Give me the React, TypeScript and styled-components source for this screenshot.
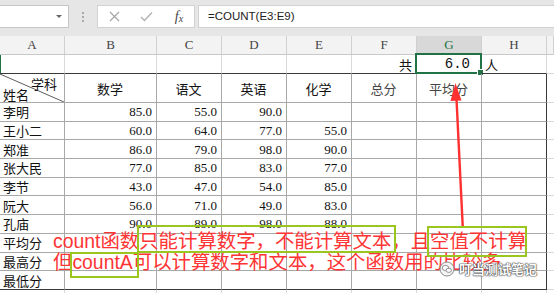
import React from "react";
import styled, { createGlobalStyle } from "styled-components";

const GlobalStyle = createGlobalStyle`
  html, body { margin: 0; padding: 0; background: #fff; }
  body { width: 554px; height: 293px; overflow: hidden; }
`;

const CJK = `"Noto Sans CJK SC", "Noto Sans", sans-serif`;
const SERIF = `"Liberation Serif", "Noto Sans CJK SC", serif`;
const COLS = "65px 92px 65px 65px 65px 65px 65px 65px 1fr";

const GRID = "#d9d9d9";
const TABLE = "#a8a8a8";
const OUTER = "#3a3a3a";
const GREEN = "#217346";

const Frame = styled.div`
  position: relative;
  width: 554px;
  height: 293px;
  overflow: hidden;
  background: #fff;
  display: flex;
  flex-direction: column;
`;

const FormulaBar = styled.div`
  height: 36px;
  flex: none;
  box-sizing: border-box;
  background: #e6e6e6;
  display: flex;
  align-items: flex-start;
  padding-top: 5px;
`;

const NameBox = styled.div`
  width: 69px;
  height: 23px;
  box-sizing: border-box;
  background: #fff;
  border: 1px solid #c6c6c6;
  border-left: none;
  display: flex;
  justify-content: flex-end;
  align-items: center;
  padding-right: 6px;
`;

const DropArrow = styled.span`
  width: 0;
  height: 0;
  border-left: 3px solid transparent;
  border-right: 3px solid transparent;
  border-top: 3px solid #666;
`;

const Grip = styled.div`
  width: 28px;
  height: 23px;
  display: flex;
  flex-direction: column;
  align-items: center;
  justify-content: center;
  gap: 2px;
`;

const GripDot = styled.span`
  width: 2px;
  height: 2px;
  background: #a9a9a9;
`;

const ButtonGroup = styled.div`
  width: 98px;
  height: 23px;
  box-sizing: border-box;
  background: #fff;
  border: 1px solid #d2d2d2;
  display: grid;
  grid-template-columns: 32px 32px 34px;
  align-items: center;
  justify-items: center;
`;

const Fx = styled.span`
  font-family: ${SERIF};
  font-style: italic;
  font-size: 14px;
  color: #444;
  line-height: 1;
  i { font-style: italic; }
  sub { font-size: 10px; vertical-align: -1px; }
`;

const FormulaInput = styled.div`
  flex: 1;
  margin-left: 3px;
  height: 23px;
  box-sizing: border-box;
  background: #fff;
  border: 1px solid #d2d2d2;
  border-right: none;
  padding-left: 9px;
  font-family: "Liberation Sans", Arial, sans-serif;
  font-size: 11.5px;
  line-height: 21px;
  color: #222;
`;

const HeadRow = styled.div`
  display: grid;
  grid-template-columns: ${COLS};
  height: 19px;
  flex: none;
  background: #f3f3f3;
`;

const ColHead = styled.div<{ $active?: boolean }>`
  box-sizing: border-box;
  border-right: 1px solid #d0d0d0;
  border-bottom: 1px solid ${(p) => (p.$active ? GREEN : "#c9c9c9")};
  box-shadow: ${(p) => (p.$active ? `inset 0 -1px 0 ${GREEN}` : "none")};
  background: ${(p) => (p.$active ? "#d8d8d8" : "transparent")};
  color: ${(p) => (p.$active ? GREEN : "#444")};
  font-family: ${SERIF};
  font-size: 13px;
  display: flex;
  align-items: center;
  justify-content: center;
`;

const Row = styled.div<{ $h: number }>`
  display: grid;
  grid-template-columns: ${COLS};
  height: ${(p) => p.$h}px;
  flex: none;
`;

const Cell = styled.div<{
  $align?: "left" | "right" | "center";
  $r: string;
  $b: string;
  $mark?: boolean;
}>`
  position: relative;
  box-sizing: border-box;
  border-right: 1px solid ${(p) => p.$r};
  border-bottom: 1px solid ${(p) => p.$b};
  box-shadow: ${(p) => (p.$mark ? `inset 1px 0 0 ${GREEN}` : "none")};
  display: flex;
  align-items: center;
  justify-content: ${(p) =>
    p.$align === "right" ? "flex-end" : p.$align === "center" ? "center" : "flex-start"};
  padding: 0 4px 0 3px;
  white-space: nowrap;
`;

const Label = styled.span<{ $tone?: string }>`
  font-family: ${CJK};
  font-size: 13px;
  color: ${(p) => p.$tone || "#111"};
  line-height: 1;
`;

const Num = styled.span`
  font-family: ${SERIF};
  font-size: 13px;
  color: #111;
  line-height: 1;
`;

const Count = styled.span`
  font-family: "Liberation Mono", monospace;
  font-size: 14px;
  color: #111;
  padding-right: 7px;
`;

const Selection = styled.div`
  position: absolute;
  left: -2px;
  top: -2px;
  right: -1px;
  bottom: -1px;
  border: 2px solid ${GREEN};
  pointer-events: none;
  &::after {
    content: "";
    position: absolute;
    right: -4px;
    bottom: -4px;
    width: 5px;
    height: 5px;
    background: ${GREEN};
    border: 1px solid #fff;
  }
`;

const DiagCell = styled(Cell)`
  display: block;
  padding: 0;
`;

const DiagLine = styled.svg`
  position: absolute;
  left: 0;
  top: 0;
  width: 100%;
  height: 100%;
`;

const DiagTop = styled(Label)`
  position: absolute;
  right: 7px;
  top: 3px;
`;

const DiagBottom = styled(Label)`
  position: absolute;
  left: 3px;
  bottom: 1px;
`;

const Annotation = styled.div`
  position: absolute;
  left: 53px;
  top: 231px;
  font-family: "Liberation Sans", ${CJK};
  font-size: 19.4px;
  line-height: 21px;
  color: #ff3434;
  white-space: nowrap;
`;

const GreenBox = styled.div<{ $x: number; $y: number; $w: number; $h: number }>`
  position: absolute;
  left: ${(p) => p.$x}px;
  top: ${(p) => p.$y}px;
  width: ${(p) => p.$w}px;
  height: ${(p) => p.$h}px;
  box-sizing: border-box;
  border: 2.5px solid #9bc61f;
`;

const ArrowLayer = styled.svg`
  position: absolute;
  left: 0;
  top: 0;
  pointer-events: none;
`;

const Watermark = styled.div`
  position: absolute;
  left: 439px;
  top: 259px;
  display: flex;
  align-items: center;
  gap: 4px;
`;

const WatermarkText = styled.span`
  font-family: ${CJK};
  font-size: 13px;
  font-weight: 700;
  color: #fff;
  text-shadow: 0 0 1px #333, 0 0 1px #333, 0 0 2px #555;
`;

type RowData = { name: string; vals: (string | null)[] };

const DATA: RowData[] = [
  { name: "李明", vals: ["85.0", "55.0", "90.0", null] },
  { name: "王小二", vals: ["60.0", "64.0", "77.0", "55.0"] },
  { name: "郑准", vals: ["86.0", "79.0", "98.0", "90.0"] },
  { name: "张大民", vals: ["77.0", "85.0", "83.0", "77.0"] },
  { name: "李节", vals: ["43.0", "47.0", "54.0", "85.0"] },
  { name: "阮大", vals: ["56.0", "71.0", "49.0", "83.0"] },
  { name: "孔庙", vals: ["90.0", "89.0", "98.0", "88.0"] },
  { name: "平均分", vals: [null, null, null, null] },
  { name: "最高分", vals: [null, null, null, null] },
  { name: "最低分", vals: [null, null, null, null] },
];

const LETTERS = ["A", "B", "C", "D", "E", "F", "G", "H", ""];
const SUBJECTS = ["数学", "语文", "英语", "化学", "总分", "平均分", ""];

const rightOf = (col: number) => (col === 7 ? OUTER : TABLE);

export default function App() {
  return (
    <>
      <GlobalStyle />
      <Frame>
        <FormulaBar>
          <NameBox>
            <DropArrow />
          </NameBox>
          <Grip>
            <GripDot />
            <GripDot />
            <GripDot />
          </Grip>
          <ButtonGroup>
            <svg width="11" height="11" viewBox="0 0 11 11">
              <path d="M1 1 L10 10 M10 1 L1 10" stroke="#a6a6a6" strokeWidth="1.2" fill="none" />
            </svg>
            <svg width="13" height="11" viewBox="0 0 13 11">
              <path d="M1 6 L4.5 9.5 L12 1.5" stroke="#b0b0b0" strokeWidth="1.3" fill="none" />
            </svg>
            <Fx>
              <i>f</i>
              <sub>x</sub>
            </Fx>
          </ButtonGroup>
          <FormulaInput>=COUNT(E3:E9)</FormulaInput>
        </FormulaBar>

        <HeadRow>
          {LETTERS.map((l, i) => (
            <ColHead key={i} $active={l === "G"}>
              {l}
            </ColHead>
          ))}
        </HeadRow>

        <Row $h={19}>
          {LETTERS.map((_, i) => {
            const inTable = i < 8;
            return (
              <Cell
                key={i}
                $r={i === 8 ? "transparent" : GRID}
                $b={inTable ? OUTER : GRID}
                $mark={i === 0}
                $align={i === 5 || i === 6 ? "right" : "left"}
              >
                {i === 5 && <Label>共</Label>}
                {i === 6 && (
                  <>
                    <Count>6.0</Count>
                    <Selection />
                  </>
                )}
                {i === 7 && <Label>人</Label>}
              </Cell>
            );
          })}
        </Row>

        <Row $h={29}>
          <DiagCell $r={TABLE} $b={TABLE}>
            <DiagLine viewBox="0 0 64 28" preserveAspectRatio="none">
              <line x1="0" y1="0" x2="64" y2="28" stroke="#4a4a4a" strokeWidth="0.9" />
            </DiagLine>
            <DiagTop>学科</DiagTop>
            <DiagBottom>姓名</DiagBottom>
          </DiagCell>
          {SUBJECTS.map((s, i) => (
            <Cell key={i} $r={rightOf(i + 1)} $b={TABLE} $align="center">
              <Label $tone={s === "总分" || s === "平均分" ? "#444" : "#111"}>{s}</Label>
            </Cell>
          ))}
          <Cell $r="transparent" $b={GRID} />
        </Row>

        {DATA.map((row, ri) => {
          const last = ri === DATA.length - 1;
          const b = last ? OUTER : TABLE;
          return (
            <Row key={ri} $h={18.7}>
              <Cell $r={TABLE} $b={b}>
                <Label>{row.name}</Label>
              </Cell>
              {row.vals.map((v, ci) => (
                <Cell key={ci} $r={TABLE} $b={b} $align="right">
                  {v && <Num>{v}</Num>}
                </Cell>
              ))}
              <Cell $r={TABLE} $b={b} />
              <Cell $r={TABLE} $b={b} />
              <Cell $r={OUTER} $b={b} />
              <Cell $r="transparent" $b={GRID} />
            </Row>
          );
        })}

        <Row $h={19}>
          {LETTERS.map((_, i) => (
            <Cell key={i} $r={i === 8 ? "transparent" : GRID} $b={GRID} />
          ))}
        </Row>

        <ArrowLayer width="554" height="293" viewBox="0 0 554 293">
          <line x1="456.5" y1="99" x2="462.8" y2="228" stroke="#ff3030" strokeWidth="2.4" />
          <polygon points="455.5,83 450.5,101 461.5,100.5" fill="#ff3030" />
        </ArrowLayer>

        <Annotation>
          <div>count函数只能计算数字，不能计算文本，且空值不计算</div>
          <div>但countA可以计算数字和文本，这个函数用的比较多</div>
        </Annotation>

        <GreenBox $x={137} $y={225} $w={259} $h={28} />
        <GreenBox $x={70} $y={252} $w={69} $h={26} />
        <GreenBox $x={427} $y={226} $w={100} $h={31} />

        <Watermark>
          <svg width="16" height="16" viewBox="0 0 16 16">
            <circle cx="8" cy="8" r="7" fill="#f4f4f4" stroke="#8a8a8a" strokeWidth="1" />
            <ellipse cx="6.5" cy="7" rx="3.3" ry="2.6" fill="#fff" stroke="#777" strokeWidth="0.8" />
            <ellipse cx="9.8" cy="9.3" rx="2.7" ry="2.1" fill="#fff" stroke="#777" strokeWidth="0.8" />
          </svg>
          <WatermarkText>叮当测试笔记</WatermarkText>
        </Watermark>
      </Frame>
    </>
  );
}
